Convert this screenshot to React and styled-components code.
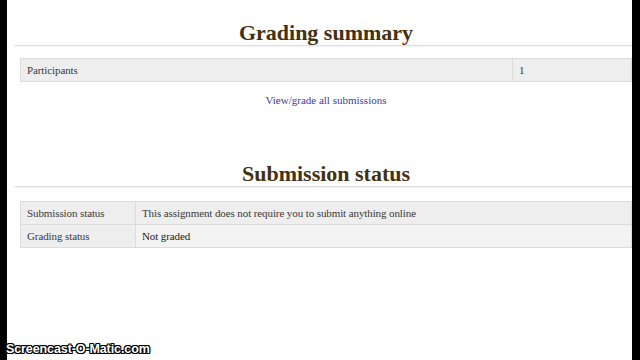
import React from "react";
import styled, { createGlobalStyle } from "styled-components";

const Global = createGlobalStyle`
  html, body { margin: 0; padding: 0; background: #000; }
  #root { height: 360px; }
`;

const Frame = styled.div`
  position: relative;
  height: 360px;
  width: 640px;
  background: #000;
  display: flex;
  overflow: hidden;
`;

const Page = styled.main`
  flex: 1;
  margin: 0 8px 0 7px;
  background: #fff;
  padding-left: 13px;
  font-family: "Liberation Serif", "DejaVu Serif", serif;
  color: #333;
`;

const Heading = styled.h2`
  margin: ${(p) => p.$top}px 0 0 -5px;
  padding: 0 0 1px 5px;
  font-family: "Liberation Serif", serif;
  font-weight: bold;
  font-size: 22px;
  line-height: 22px;
  color: #45300f;
  text-align: center;
  border-bottom: 1px solid #dedede;
  box-shadow: 0 1px 0 #f2f2f2;
`;

const Table = styled.table`
  width: 100%;
  border-collapse: collapse;
  margin-top: ${(p) => p.$top}px;
  font-size: 11px;
  letter-spacing: -0.1px;
`;

const Cell = styled.td`
  height: 23px;
  padding: 0 0 0 6px;
  border: 1px solid #dcdcdc;
  background: ${(p) => p.$bg || "#eeeeee"};
  width: ${(p) => p.$w || "auto"};
  color: ${(p) => (p.$strong ? "#1a1a1a" : "#3a3a3a")};
  vertical-align: middle;
  box-sizing: border-box;
`;

const LinkRow = styled.div`
  margin-top: 11px;
  text-align: center;
  font-size: 11px;
  line-height: 14px;
`;

const Link = styled.a`
  color: #3c3c9c;
  text-decoration: none;
`;

const Watermark = styled.div`
  position: absolute;
  left: 6px;
  bottom: 4px;
  font-family: "Liberation Sans", Arial, sans-serif;
  font-weight: bold;
  font-size: 12.5px;
  color: #fff;
  letter-spacing: -0.1px;
  text-shadow: -1px -1px 0 #000, 1px -1px 0 #000, -1px 1px 0 #000, 1px 1px 0 #000,
    0 1px 0 #000, 0 -1px 0 #000, 1px 0 0 #000, -1px 0 0 #000;
`;

export default function App() {
  return (
    <>
      <Global />
      <Frame>
        <Page>
          <Heading $top={22}>Grading summary</Heading>
          <Table $top={12}>
            <tbody>
              <tr>
                <Cell $w="492px">Participants</Cell>
                <Cell>1</Cell>
              </tr>
            </tbody>
          </Table>
          <LinkRow>
            <Link href="#">View/grade all submissions</Link>
          </LinkRow>
          <Heading $top={56}>Submission status</Heading>
          <Table $top={14}>
            <tbody>
              <tr>
                <Cell $w="115px">Submission status</Cell>
                <Cell>This assignment does not require you to submit anything online</Cell>
              </tr>
              <tr>
                <Cell $w="115px">Grading status</Cell>
                <Cell $bg="#f3f3f3" $strong>Not graded</Cell>
              </tr>
            </tbody>
          </Table>
        </Page>
        <Watermark>Screencast-O-Matic.com</Watermark>
      </Frame>
    </>
  );
}
